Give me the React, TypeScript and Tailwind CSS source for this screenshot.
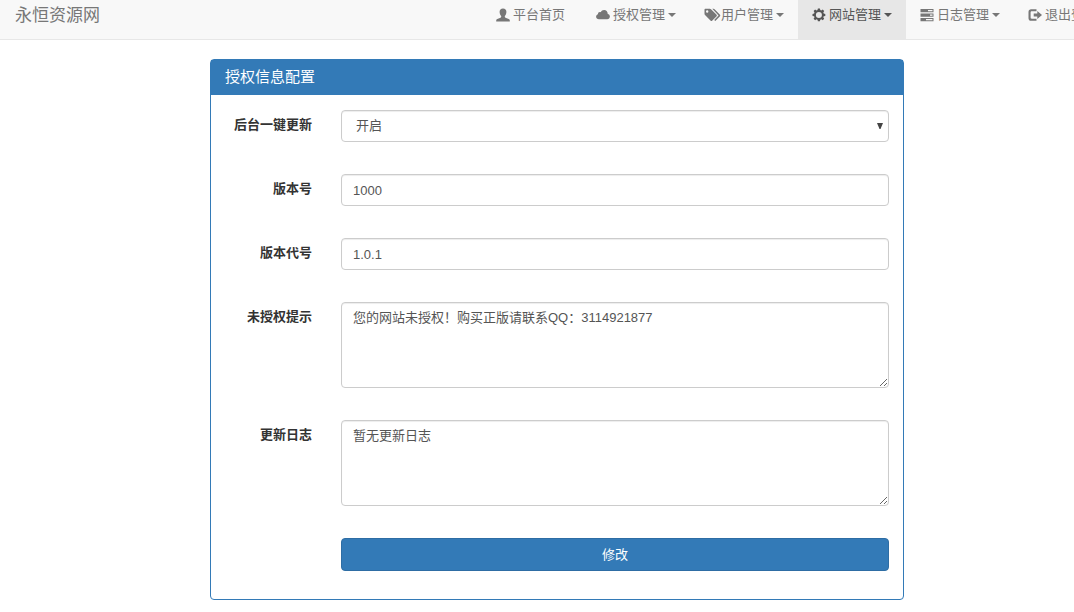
import React, { useState } from 'react';

const FONT = "font-['Liberation_Sans','Noto_Sans_CJK_SC',sans-serif]";

const CONTROL =
    'block w-full rounded-[4px] border border-[#ccc] bg-white text-[13px] text-[#555] shadow-[inset_0_1px_1px_rgba(0,0,0,0.075)] outline-none focus:border-[#66afe9]';

// --- Icons ---
const Icon: React.FC<{ children: React.ReactNode }> = ({ children }) => (
    <svg viewBox="0 0 14 14" className="h-[14px] w-[14px] shrink-0" fill="currentColor" aria-hidden="true">
        {children}
    </svg>
);

const UserIcon = () => (
    <Icon>
        <path d="M7 .5c2.200 0 3.400 1.300 3.400 3.300 0 1.700-.6 3.300-1.600 4.200v.8c0 .5.300.8.700 1l3.200 1.300c.7.300 1.100.8 1.100 1.500v.9H.2v-.9c0-.7.4-1.200 1.100-1.500l3.200-1.300c.4-.2.7-.5.7-1V8C4.200 7.100 3.600 5.500 3.600 3.800 3.600 1.800 4.800.5 7 .5z" />
    </Icon>
);

const CloudIcon = () => (
    <Icon>
        <path d="M2.900 11.200C1.300 11.200.1 10.100.1 8.700c0-1.300.8-2.200 1.900-2.500-.1-1.300.7-2.200 1.800-2.200.4 0 .7.100 1 .300C5.400 2.800 6.600 2 8.100 2c2.100 0 3.600 1.600 3.600 3.600v.300c1.300.200 2.200 1.200 2.200 2.600 0 1.500-1.200 2.700-2.700 2.700z" />
    </Icon>
);

const TagsIcon = () => (
    <svg viewBox="0 0 17 14" className="-mr-[3px] h-[14px] w-[17px] shrink-0" fill="currentColor" aria-hidden="true">
        <path
            fillRule="evenodd"
            d="M.5 1.800C.5 1.200.9.800 1.500.800h4.300c.5 0 .9.200 1.200.5l5.600 5.500c.4.4.4 1 0 1.400l-4.500 4.500c-.4.4-1 .4-1.400 0L1 7C.7 6.700.5 6.300.5 5.800zM3.200 2.300a1.200 1.200 0 1 0 0 2.400 1.200 1.200 0 0 0 0-2.400z"
        />
        <path d="M8.300.800h1.200c.4 0 .8.200 1.100.5l5.400 5.500c.4.4.4 1 0 1.400l-4.700 4.800-1.100-1.100 4.300-4.400z" />
    </svg>
);

const CogIcon = () => (
    <Icon>
        <path
            fillRule="evenodd"
            d="M5.900.5h2l.4 1.600 1 .4 1.400-.9 1.500 1.500-.9 1.400.4 1 1.600.4v2l-1.600.4-.4 1 .9 1.400-1.500 1.500-1.400-.9-1 .4-.4 1.600h-2l-.4-1.600-1-.4-1.400.9-1.500-1.500.9-1.400-.4-1L.5 7.900v-2l1.600-.4.4-1-.9-1.400 1.500-1.500 1.400.9 1-.4zM6.900 3.900a3 3 0 1 0 0 6 3 3 0 0 0 0-6z"
        />
    </Icon>
);

const TasksIcon = () => (
    <Icon>
        <path
            fillRule="evenodd"
            d="M.5 1h13v3.200H.5zM8 2v1.200h4.500V2zM.5 5.500h13v3.200H.5zM10 6.500v1.200h2.500V6.500zM.5 10h13v3.200H.5zM6 11v1.200h6.500V11z"
        />
    </Icon>
);

const LogoutIcon = () => (
    <Icon>
        <path d="M8.500 1.200v2H3.800c-.8 0-1.200.4-1.200 1.200v5.200c0 .8.400 1.200 1.200 1.200h4.700v2H3.200C1.500 12.800.5 11.800.5 10.200V3.900c0-1.700 1-2.700 2.700-2.700z" />
        <path d="M9.300 2.900 14 7l-4.700 4.100V8.500H5.700v-3h3.600z" />
    </Icon>
);

const Caret = () => (
    <svg viewBox="0 0 8 4" className="h-1 w-2 shrink-0" fill="currentColor" aria-hidden="true">
        <path d="M0 0h8L4 4z" />
    </svg>
);

const NAV_ITEMS = [
    { label: '平台首页', icon: <UserIcon />, menu: false, active: false },
    { label: '授权管理', icon: <CloudIcon />, menu: true, active: false },
    { label: '用户管理', icon: <TagsIcon />, menu: true, active: false },
    { label: '网站管理', icon: <CogIcon />, menu: true, active: true },
    { label: '日志管理', icon: <TasksIcon />, menu: true, active: false },
    { label: '退出登录', icon: <LogoutIcon />, menu: false, active: false },
];

const Navbar: React.FC = () => (
    <nav className="flex justify-between border-b border-[#e7e7e7] bg-[#f8f8f8]">
        <a href="#" className="shrink-0 pt-[6px] pl-[15px] text-[17px] leading-5 text-[#777]">
            永恒资源网
        </a>
        <ul className="flex shrink-0">
            {NAV_ITEMS.map((item) => (
                <li key={item.label}>
                    <a
                        href="#"
                        className={`flex items-center px-[14px] pt-[5px] pb-[14px] text-[13px] leading-5 whitespace-nowrap ${item.active ? 'bg-[#e7e7e7] text-[#555]' : 'text-[#777] hover:text-[#333]'}`}
                    >
                        {item.icon}
                        <span className="mx-[3px]">{item.label}</span>
                        {item.menu && <Caret />}
                    </a>
                </li>
            ))}
        </ul>
    </nav>
);

const Field: React.FC<{ id: string; label: string; children: React.ReactNode }> = ({ id, label, children }) => (
    <div className="grid grid-cols-[87px_1fr] gap-x-[29px]">
        <label htmlFor={id} className="pt-[5px] text-right text-[13px] leading-5 font-bold text-[#333]">
            {label}
        </label>
        {children}
    </div>
);

const App: React.FC = () => {
    const [update, setUpdate] = useState('1');

    return (
        <div className={`min-h-screen overflow-hidden bg-white ${FONT}`}>
            {/* Wide page, runs past the right edge of the window */}
            <div className="-mr-10">
                <Navbar />

                <main className="mx-auto mt-[19px] max-w-[694px] rounded-[4px] border border-[#337ab7]">
                    <h3 className="bg-[#337ab7] px-[14px] pt-[7px] pb-[9px] text-[15px] leading-[19px] text-white">
                        授权信息配置
                    </h3>

                    <form className="flex flex-col gap-8 px-[14px] pt-[15px] pb-7" onSubmit={(e) => e.preventDefault()}>
                        <Field id="update" label="后台一键更新">
                            <div className="relative">
                                <select
                                    id="update"
                                    value={update}
                                    onChange={(e) => setUpdate(e.target.value)}
                                    className={`${CONTROL} h-8 appearance-none pl-[14px]`}
                                >
                                    <option value="1">开启</option>
                                    <option value="0">关闭</option>
                                </select>
                                <svg
                                    viewBox="0 0 6 6"
                                    className="pointer-events-none absolute top-[13px] right-[6px] h-[6px] w-[6px]"
                                    fill="#444"
                                    aria-hidden="true"
                                >
                                    <path d="M0 0h6L3.500 6h-1z" />
                                </svg>
                            </div>
                        </Field>

                        <Field id="version" label="版本号">
                            <input id="version" type="text" defaultValue="1000" className={`${CONTROL} h-8 px-[11px]`} />
                        </Field>

                        <Field id="code" label="版本代号">
                            <input id="code" type="text" defaultValue="1.0.1" className={`${CONTROL} h-8 px-[11px]`} />
                        </Field>

                        <Field id="notice" label="未授权提示">
                            <textarea
                                id="notice"
                                defaultValue="您的网站未授权！购买正版请联系QQ：3114921877"
                                className={`${CONTROL} h-[86px] resize-y px-[11px] py-[6px] leading-[18px]`}
                            />
                        </Field>

                        <Field id="log" label="更新日志">
                            <textarea
                                id="log"
                                defaultValue="暂无更新日志"
                                className={`${CONTROL} h-[86px] resize-y px-[11px] py-[6px] leading-[18px]`}
                            />
                        </Field>

                        <div className="grid grid-cols-[87px_1fr] gap-x-[29px]">
                            <button
                                type="submit"
                                className="col-start-2 h-[33px] cursor-pointer rounded-[4px] border border-[#2e6da4] bg-[#337ab7] text-[13px] text-white hover:bg-[#286090]"
                            >
                                修改
                            </button>
                        </div>
                    </form>
                </main>
            </div>
        </div>
    );
};

export default App;
